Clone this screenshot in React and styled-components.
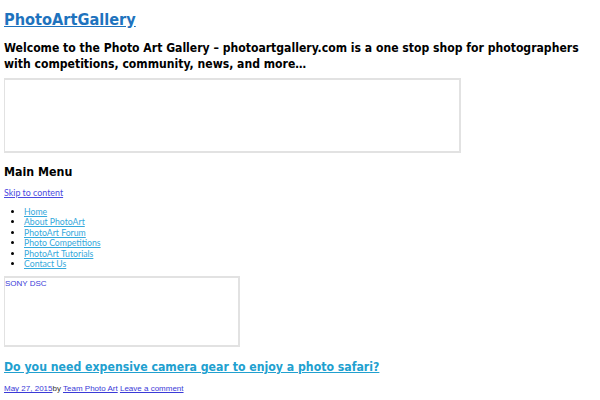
import React from 'react';
import styled, { createGlobalStyle } from 'styled-components';

const colors = {
  siteTitle: '#1e73be',
  text: '#000000',
  skip: '#4a4ae0',
  menu: '#35a9dc',
  postTitle: '#21a0cf',
  meta: '#3a3ad8',
  border: '#e2e2e2',
};

const heading = `'DejaVu Sans Condensed', 'DejaVu Sans', sans-serif`;

const GlobalStyle = createGlobalStyle`
  body {
    margin: 0;
    padding: 0 4px;
    background: #ffffff;
    font-family: ${heading};
    font-stretch: condensed;
    color: ${colors.text};
  }
`;

const Page = styled.div`
  display: flex;
  flex-direction: column;
`;

const SiteTitle = styled.a`
  display: block;
  margin-top: 10px;
  font-family: ${heading};
  font-stretch: condensed;
  font-size: 16.2px;
  font-weight: bold;
  line-height: 20px;
  color: ${colors.siteTitle};
  text-decoration: underline;
`;

const Description = styled.h2`
  margin: 10px 0 0;
  font-family: ${heading};
  font-stretch: condensed;
  font-size: 12.1px;
  font-weight: bold;
  line-height: 16px;
`;

const Frame = styled.div`
  box-sizing: border-box;
  width: ${p => p.$w}px;
  height: ${p => p.$h}px;
  margin-top: ${p => p.$top}px;
  border: 2px solid ${colors.border};
  border-left-width: 1px;
  padding: 1px 0 0 0;
  font-family: 'Liberation Sans', Arial, sans-serif;
  font-size: 8px;
  line-height: 10px;
  color: ${colors.meta};
`;

const MenuTitle = styled.h3`
  margin: 11px 0 0;
  font-family: ${heading};
  font-stretch: condensed;
  font-size: 12.3px;
  font-weight: bold;
  line-height: 16px;
`;

const SkipLink = styled.a`
  display: block;
  margin-top: 7px;
  font-family: 'Lato', sans-serif;
  font-size: 8.9px;
  line-height: 11px;
  color: ${colors.skip};
  text-decoration: underline;
`;

const MenuList = styled.ul`
  margin: 9px 0 0;
  padding-left: 20px;
  list-style: disc;
  font-family: 'Lato', sans-serif;
  font-size: 8.7px;
  line-height: 10.4px;
`;

const MenuLink = styled.a`
  color: ${colors.menu};
  text-decoration: underline;
`;

const PostTitle = styled.a`
  display: block;
  margin-top: 12px;
  font-family: ${heading};
  font-stretch: condensed;
  font-size: 12.2px;
  font-weight: bold;
  line-height: 16px;
  color: ${colors.postTitle};
  text-decoration: underline;
`;

const Meta = styled.div`
  margin-top: 9px;
  font-family: 'Liberation Sans', Arial, sans-serif;
  font-size: 8px;
  line-height: 10px;
  color: #333;

  a {
    color: ${colors.meta};
    text-decoration: underline;
  }
`;

const menuItems = [
  'Home',
  'About PhotoArt',
  'PhotoArt Forum',
  'Photo Competitions',
  'PhotoArt Tutorials',
  'Contact Us',
];

const App = () => (
  <Page>
    <GlobalStyle />
    <SiteTitle href="#">PhotoArtGallery</SiteTitle>
    <Description>
      Welcome to the Photo Art Gallery – photoartgallery.com is a one stop shop for photographers
      with competitions, community, news, and more…
    </Description>
    <Frame $w={457} $h={75} $top={6} />
    <MenuTitle>Main Menu</MenuTitle>
    <SkipLink href="#">Skip to content</SkipLink>
    <MenuList>
      {menuItems.map(item => (
        <li key={item}>
          <MenuLink href="#">{item}</MenuLink>
        </li>
      ))}
    </MenuList>
    <Frame $w={236} $h={71} $top={7}>SONY DSC</Frame>
    <PostTitle href="#">Do you need expensive camera gear to enjoy a photo safari?</PostTitle>
    <Meta>
      <a href="#">May 27, 2015</a>by <a href="#">Team Photo Art</a> <a href="#">Leave a comment</a>
    </Meta>
  </Page>
);

export default App;
